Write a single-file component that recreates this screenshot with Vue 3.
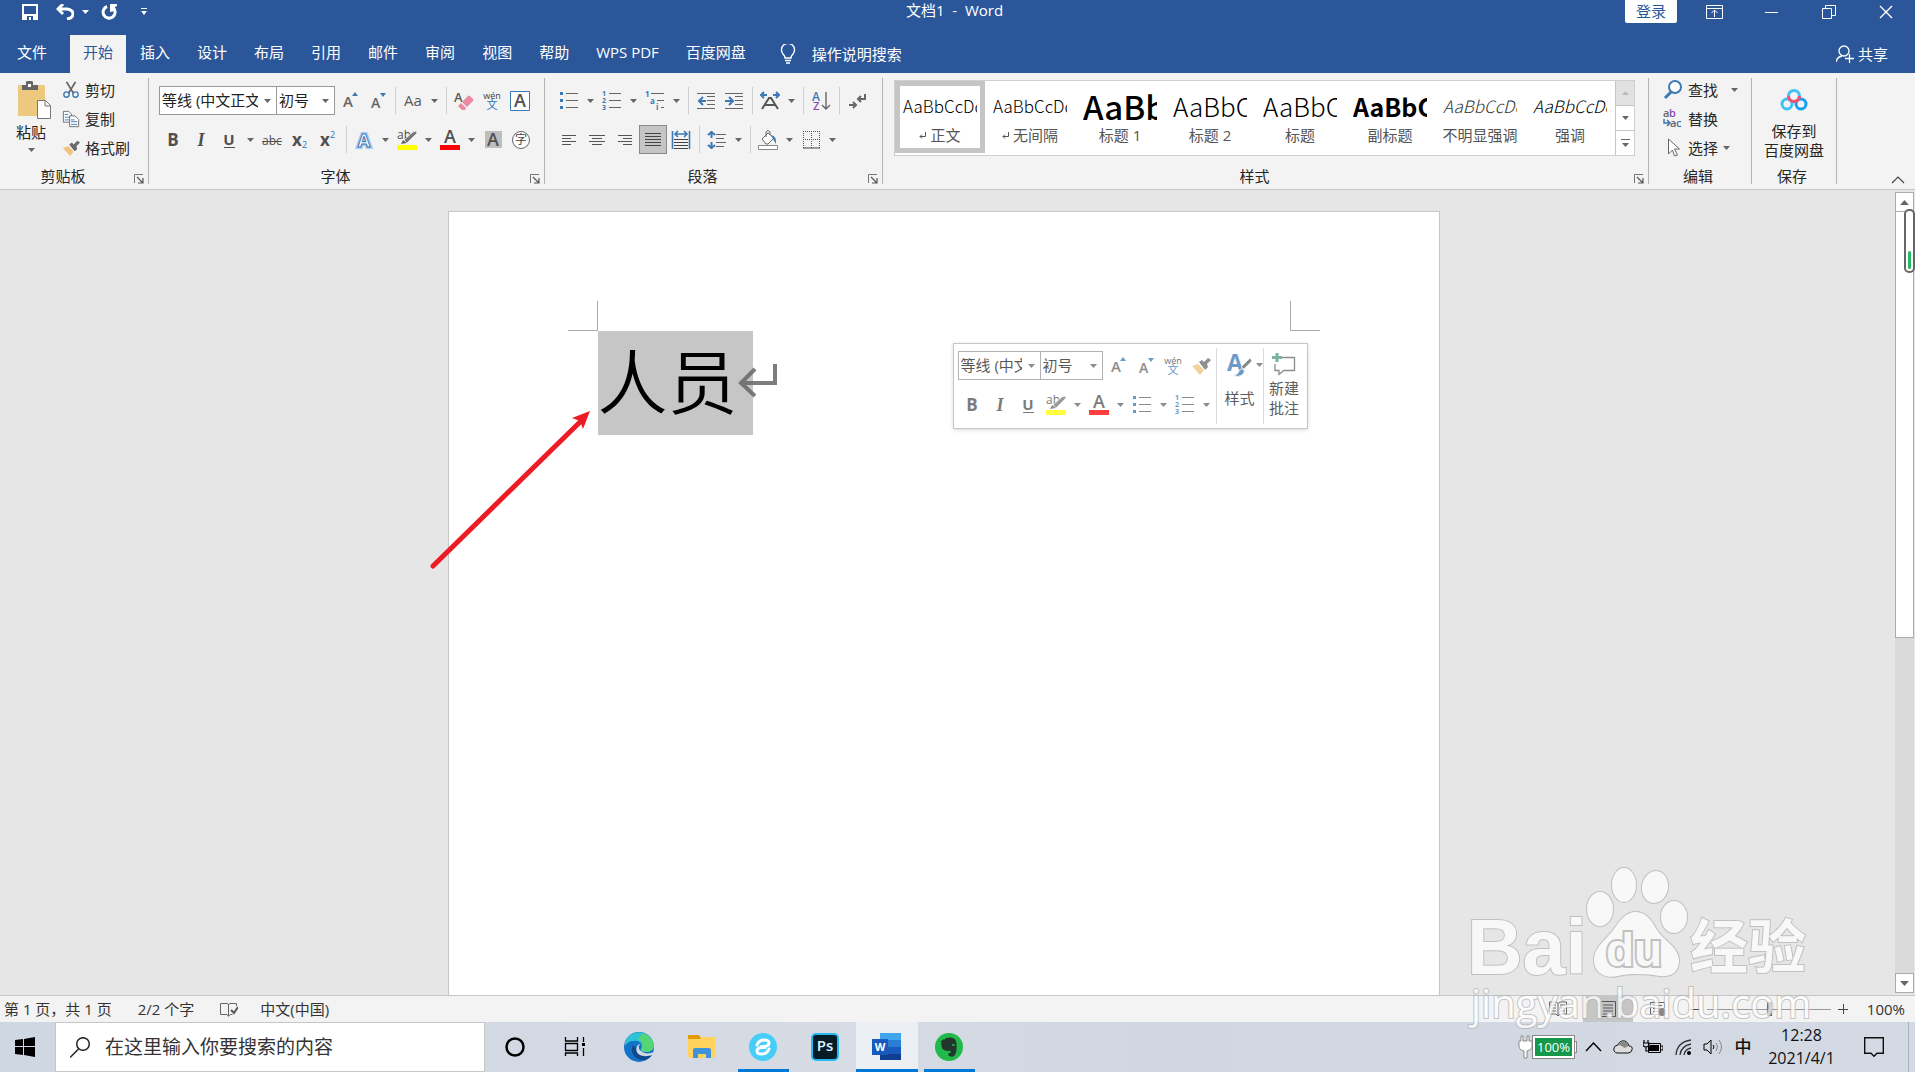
<template>
  <div class="desktop">
    <!-- 图标定义 -->
    <svg class="sprite" aria-hidden="true">
      <symbol id="i-caret" viewBox="0 0 7 4"><path d="M0 0h7L3.5 4z" fill="currentColor" /></symbol>
      <symbol id="i-bold" viewBox="0 0 20 20"><text x="10" y="16" text-anchor="middle" font-size="17" font-weight="700" fill="#505050">B</text></symbol>
      <symbol id="i-italic" viewBox="0 0 20 20"><text x="10" y="16" text-anchor="middle" font-size="18" font-weight="700" font-style="italic" font-family="Liberation Serif, serif" fill="#505050">I</text></symbol>
      <symbol id="i-underline" viewBox="0 0 20 20"><text x="10" y="15" text-anchor="middle" font-size="15" font-weight="700" fill="#505050">U</text><path d="M5 17h11v1H5z" fill="#505050" /></symbol>
      <symbol id="i-strike" viewBox="0 0 20 20"><text x="10" y="15" text-anchor="middle" font-size="12" fill="#505050">abc</text><path d="M0 11h20v1H0z" fill="#505050" /></symbol>
      <symbol id="i-sub" viewBox="0 0 20 20"><text x="2" y="16" font-size="17" font-weight="700" fill="#505050">x</text><text x="12" y="18" font-size="9" fill="#2e75b6">2</text></symbol>
      <symbol id="i-sup" viewBox="0 0 20 20"><text x="2" y="16" font-size="17" font-weight="700" fill="#505050">x</text><text x="12" y="8" font-size="9" fill="#2e75b6">2</text></symbol>
      <symbol id="i-grow" viewBox="0 0 20 20"><text x="4" y="16" font-size="15" font-weight="600" fill="#666">A</text><path d="M13 5h6l-3-4z" fill="#3c79b4" /></symbol>
      <symbol id="i-shrink" viewBox="0 0 20 20"><text x="4" y="17" font-size="14" font-weight="600" fill="#666">A</text><path d="M13 2h6l-3 4z" fill="#3c79b4" /></symbol>
      <symbol id="i-case" viewBox="0 0 20 20"><text x="10" y="15" text-anchor="middle" font-size="15" fill="#595959">Aa</text></symbol>
      <symbol id="i-clear" viewBox="0 0 20 20"><text x="0" y="11" font-size="13" font-weight="600" fill="#595959">A</text><path d="M8 11l6-6q1-1 2 0l3 3q1 1 0 2l-6 6z" fill="#ea8aa0" /><path d="M7 12l5 5-1 2H8l-4-4z" fill="#ea8aa0" /></symbol>
      <symbol id="i-pinyin" viewBox="0 0 20 20"><text x="10" y="8" text-anchor="middle" font-size="9" fill="#404040">wén</text><text x="10" y="18" text-anchor="middle" font-size="11" fill="#2e75b6">文</text></symbol>
      <symbol id="i-border-a" viewBox="0 0 20 20"><path d="M.5.5h19v19H.5z" fill="#fff" stroke="#3c79b4" /><text x="10" y="16" text-anchor="middle" font-size="18" font-weight="600" fill="#505050">A</text></symbol>
      <symbol id="i-effect" viewBox="0 0 20 20"><text x="10" y="17" text-anchor="middle" font-size="18" font-weight="700" fill="none" stroke="#a9cbf0" stroke-width="4">A</text><text x="10" y="17" text-anchor="middle" font-size="18" font-weight="700" fill="#fff" stroke="#3c79b4">A</text></symbol>
      <symbol id="i-highlight" viewBox="0 0 20 20"><text x="0" y="9" font-size="12" fill="#505050">ab</text><path d="M19 1l1 2-10 10-3-3L16 2z" fill="#777" stroke="#f3f3f3" stroke-width=".7" /><path d="M6 10l4 3-6 1z" fill="#666" /><path d="M0 15h20v5H0z" fill="#ff0" /></symbol>
      <symbol id="i-color" viewBox="0 0 20 20"><text x="10" y="13" text-anchor="middle" font-size="18" font-weight="600" fill="#505050">A</text><path d="M0 15h20v5H0z" fill="#f00" /></symbol>
      <symbol id="i-shade-a" viewBox="0 0 20 20"><path d="M2 1h17v17H2z" fill="#bdbdbd" /><text x="10" y="16" text-anchor="middle" font-size="18" font-weight="600" fill="#505050">A</text></symbol>
      <symbol id="i-circle" viewBox="0 0 20 20"><circle cx="10" cy="10" r="8.5" fill="#fff" stroke="#666" /><text x="10" y="14" text-anchor="middle" font-size="12" fill="#444">字</text></symbol>
      <symbol id="i-bullets" viewBox="0 0 20 20"><path d="M7 2.500h12M7 9.500h12M7 16.500h12" stroke="#666" /><path d="M1 1h3v3H1zM1 8h3v3H1zM1 15h3v3H1z" fill="#3c79b4" /></symbol>
      <symbol id="i-numbers" viewBox="0 0 20 20"><path d="M7 2.500h12M7 9.500h12M7 16.500h12" stroke="#666" /><g font-size="7" font-weight="700" fill="#3c79b4"><text x="0" y="5">1</text><text x="0" y="12">2</text><text x="0" y="19">3</text></g></symbol>
      <symbol id="i-levels" viewBox="0 0 20 20"><path d="M6 2.500h13M12 9.500h7M16 16.500h3" stroke="#666" /><g font-size="8" font-weight="700" fill="#3c79b4"><text x="0" y="6">1</text><text x="5" y="13">a</text><text x="11" y="19">i</text></g></symbol>
      <symbol id="i-outdent" viewBox="0 0 20 20"><path d="M1 2.500h18M11 5.500h8M11 9.500h8M11 13.500h8M1 17.500h18" stroke="#666" /><path d="M10 10H3m4-4l-4 4 4 4" fill="none" stroke="#3c79b4" stroke-width="2" /></symbol>
      <symbol id="i-indent" viewBox="0 0 20 20"><path d="M1 2.500h18M11 5.500h8M11 9.500h8M11 13.500h8M1 17.500h18" stroke="#666" /><path d="M1 10h7M5 6l4 4-4 4" fill="none" stroke="#3c79b4" stroke-width="2" /></symbol>
      <symbol id="i-asian" viewBox="0 0 20 20"><path d="M7 4H1m3-3L1 4l3 3M13 4h6m-3-3l3 3-3 3" fill="none" stroke="#3c79b4" stroke-width="2" /><path d="M2 18l7-11h2l7 11M5 14h10" fill="none" stroke="#555" stroke-width="2" /></symbol>
      <symbol id="i-sort" viewBox="0 0 20 20"><text x="1" y="10" font-size="12" font-weight="600" fill="#3c79b4">A</text><text x="2" y="19" font-size="11" font-weight="600" fill="#8a4baf">Z</text><path d="M15 1v17m-4-4l4 4 4-4" fill="none" stroke="#666" stroke-width="1.4" /></symbol>
      <symbol id="i-marks" viewBox="0 0 20 20"><path d="M18 3v5h-7m3-3l-3 3 3 3M2 14h7m-3-3l3 3-3 3" fill="none" stroke="#666" stroke-width="2" /></symbol>
      <symbol id="i-left" viewBox="0 0 20 20"><path d="M3 5.500h14M3 8.500h9M3 11.500h14M3 14.500h9" stroke="#555" /></symbol>
      <symbol id="i-center" viewBox="0 0 20 20"><path d="M2 5.500h16M5 8.500h10M2 11.500h16M5 14.500h10" stroke="#555" /></symbol>
      <symbol id="i-right" viewBox="0 0 20 20"><path d="M3 5.500h14M8 8.500h9M3 11.500h14M8 14.500h9" stroke="#555" /></symbol>
      <symbol id="i-justify" viewBox="0 0 20 20"><path d="M2 3.500h16M2 6.500h16M2 9.500h16M2 12.500h16M2 15.500h16" stroke="#444" /></symbol>
      <symbol id="i-spread" viewBox="0 0 20 20"><path d="M1.500 1v18M18.500 1v18M4 4h12M7 1L4 4l3 3m6-6l3 3-3 3" fill="none" stroke="#3c79b4" stroke-width="1.600" /><path d="M3 9.500h14M3 12.500h14M3 15.500h14M3 18.500h14" stroke="#444" /></symbol>
      <symbol id="i-spacing" viewBox="0 0 20 20"><path d="M4.500 1v7M1 5l3.500-3L8 5M4.500 19v-7M1 15l3.500 3L8 15" fill="none" stroke="#3c79b4" stroke-width="2" /><path d="M9 4.500h10M9 8.500h8M9 12.500h10M9 16.500h8" stroke="#666" /></symbol>
      <symbol id="i-fill" viewBox="0 0 20 20"><path d="M4 9l6-6 6 5-6 6H8z" fill="#fff" stroke="#666" /><path d="M8 7V2q2-3 4 0v3" fill="none" stroke="#666" /><path d="M13 5q6 1 5 9l-3-5z" fill="#3c79b4" /><path d="M.5 15.500h19v4H.5z" fill="#fff" stroke="#888" /></symbol>
      <symbol id="i-borders" viewBox="0 0 20 20"><path d="M2 1.500h17M2 9.500h17M2.500 1v17M10.500 1v17M18.500 1v17" stroke="#555" stroke-dasharray="1 1" /><path d="M2 18h17" stroke="#444" /></symbol>
      <symbol id="i-brush" viewBox="0 0 20 20"><path d="M1 10l6-2 6 6-4 5z" fill="#f0c37d" /><path d="M8 6l3-2 2 2 4-4 3 2-4 4 1 3-3 3z" fill="#6b6b6b" /><path d="M7 7l8 8" stroke="#fff" /></symbol>
      <symbol id="i-cut" viewBox="0 0 20 20"><path d="M5 1l8 13M15 1L7 14" stroke="#666" stroke-width="2" /><circle cx="5" cy="15" r="3" fill="none" stroke="#3c79b4" stroke-width="1.500" /><circle cx="15" cy="15" r="3" fill="none" stroke="#3c79b4" stroke-width="1.500" /></symbol>
      <symbol id="i-copy" viewBox="0 0 20 20"><path d="M1.500 1.500h6l3 3v9h-9z" fill="#fff" stroke="#666" /><path d="M3 5h4M3 8h6M3 11h6" stroke="#3c79b4" /><path d="M8.500 6.500h6l4 4v8h-10z" fill="#fff" stroke="#666" /><path d="M10 11h4M10 13h7M10 16h7" stroke="#3c79b4" /></symbol>
      <symbol id="i-launch" viewBox="0 0 10 10"><path d="M.5 9V.5H9" fill="none" stroke="#777" /><path d="M3 3l6 6M9 4v5H4" fill="none" stroke="#555" stroke-width="1.200" /></symbol>
      <symbol id="i-find" viewBox="0 0 20 20"><circle cx="12" cy="7" r="6" fill="#fff" stroke="#3c79b4" stroke-width="2" /><path d="M8 12l-6 6" stroke="#3c79b4" stroke-width="3" /></symbol>
      <symbol id="i-replace" viewBox="0 0 20 20"><g font-size="11" font-weight="600"><text x="0" y="8" fill="#666">a</text><text x="6" y="8" fill="#8a4baf">b</text><text x="7" y="18" fill="#666">a</text><text x="13" y="18" fill="#3c79b4">c</text></g><path d="M1 10v4h5m-2-3l3 3-3 3" fill="none" stroke="#3c79b4" stroke-width="1.500" /></symbol>
      <symbol id="i-select" viewBox="0 0 20 20"><path d="M5.500 1v15l4-4 2 6 3-1-3-6h5z" fill="#fff" stroke="#666" /></symbol>
      <symbol id="i-edge" viewBox="0 0 30 30"><circle cx="15" cy="15" r="15" fill="#1273c8" /><path d="M1 10C5-1 20-3 27 6c5 7 2 14-5 14-4 0-6-1-5-3 3-6-3-9-8-8Q4 9 1 14z" fill="#2fc3d5" /><path d="M19 1c9 4 13 11 10 16-2 3-8 4-11 2-2-1 0-3 0-4 1-4-1-6-4-8z" fill="#55d576" /><path d="M9 13c-4 8 3 16 12 15 3-1 6-3 7-5-7 3-13 0-14-5z" fill="#114a8b" /><path d="M17 19c-3-2-3-6 0-7-5 0-7 8-1 11 4 2 9 1 12 0 2-2 1-3-1-2-4 1-8 0-10-2z" fill="#d3dae3" /></symbol>
      <symbol id="i-folder" viewBox="0 0 30 30"><path d="M2 3h11l2 3-2 3H2z" fill="#e29b00" /><path d="M2 7h12l2-2h13v19q0 2-2 2H4q-2 0-2-2z" fill="#ffd35e" /><path d="M7 26V18q0-2 2-2h14q2 0 2 2v8h-5v-4h-8v4z" fill="#3f93db" /></symbol>
      <symbol id="i-ie" viewBox="0 0 30 30"><circle cx="15" cy="15" r="14" fill="#47cef8" /><path d="M9 13q2-5 7-5 5 0 5 3 0 3-5 3.500h-3M21 17q-2 5-7 5-5 0-5-3 0-3 5-3.500h3" fill="none" stroke="#fff" stroke-width="3" stroke-linecap="round" /></symbol>
      <symbol id="i-ps" viewBox="0 0 30 30"><rect x="2" y="2" width="26" height="26" rx="4" fill="#071c26" stroke="#26b9f0" stroke-width="2" /><text x="15" y="19" text-anchor="middle" font-size="15" font-weight="600" fill="#d9f5ff">Ps</text></symbol>
      <symbol id="i-word" viewBox="0 0 30 30"><path d="M8 1h21v8H8z" fill="#41a5ee" /><path d="M8 8h21v7H8z" fill="#2b7cd3" /><path d="M8 15h21v7H8z" fill="#185abd" /><path d="M8 22h21v6H8z" fill="#103f91" /><path d="M0 7h16v16H0z" fill="#185abd" /><text x="8" y="19" text-anchor="middle" font-size="11" font-weight="700" fill="#fff">W</text></symbol>
      <symbol id="i-note" viewBox="0 0 30 30"><circle cx="15" cy="15" r="14" fill="#20b94a" /><path d="M7 11l5-5q8-2 10 3c1 4 1 10-1 14q-2 3-6 1c-2-2 1-4 2-3q0-3-3-2-4 0-6-3z" fill="#24352d" /><path d="M6 10h4V7z" fill="#24352d" /><path d="M18 13h3" stroke="#20b94a" stroke-width="1.500" /></symbol>
      <symbol id="i-cortana" viewBox="0 0 30 30"><circle cx="15" cy="15" r="8.500" fill="none" stroke="#000" stroke-width="2.500" /></symbol>
      <symbol id="i-taskview" viewBox="0 0 30 30"><path d="M3.500 5v4h12V5M3.500 24v-3h12v3M3.500 11.500h12v7h-12zM21.500 5v5M21.500 16v8" fill="none" stroke="#000" stroke-width="1.300" /><path d="M20 11h3v3h-3z" /></symbol>
    </svg>

    <!-- 标题栏 -->
    <header class="titlebar">
      <div class="quick">
        <button class="quick-btn" aria-label="保存">
          <svg width="16" height="16" viewBox="0 0 16 16"><path d="M1 1h14v14H1z" fill="none" stroke="#fff" stroke-width="2" /><path d="M1 10h14v6H1z" fill="#fff" /><path d="M5 12h6v4H9v-3H7v3H5z" fill="#2b579a" /></svg>
        </button>
        <button class="quick-btn undo" aria-label="撤消">
          <svg width="18" height="16" viewBox="0 0 18 16"><path d="M2 5h9q6 1 6 5t-6 5M7 0L2 5l5 5" fill="none" stroke="#fff" stroke-width="3" /></svg>
          <svg class="caret" width="7" height="4"><use href="#i-caret" /></svg>
        </button>
        <button class="quick-btn redo" aria-label="重复">
          <svg width="18" height="16" viewBox="0 0 18 16"><path d="M6 2.500a6 6 0 1 0 6.500 1.500" fill="none" stroke="#fff" stroke-width="3" /><path d="M9 0h7v2l-2 1v4l-5 1z" fill="#fff" /></svg>
        </button>
        <button class="quick-btn more" aria-label="自定义快速访问工具栏">
          <svg width="6" height="7" viewBox="0 0 6 7"><path d="M0 0h6v1H0zM0 3h6L3 7z" fill="#fff" /></svg>
        </button>
      </div>
      <h1 class="doc-title">文档1&nbsp; -&nbsp; Word</h1>
      <div class="window-btns">
        <button class="login">登录</button>
        <button class="win-btn" aria-label="功能区显示选项">
          <svg width="17" height="14" viewBox="0 0 17 14"><path d="M.5.5h16v13H.5zM0 3.500h17M8.500 12V5M5.500 8l3-3 3 3" fill="none" stroke="#fff" /></svg>
        </button>
        <button class="win-btn" aria-label="最小化">
          <svg width="14" height="14" viewBox="0 0 14 14"><path d="M0 7.500h13" stroke="#fff" /></svg>
        </button>
        <button class="win-btn" aria-label="还原">
          <svg width="14" height="14" viewBox="0 0 14 14"><path d="M.5 3.500h9v10h-9zM3.500 3V.5h10v10H10" fill="none" stroke="#fff" /></svg>
        </button>
        <button class="win-btn" aria-label="关闭">
          <svg width="14" height="14" viewBox="0 0 14 14"><path d="M1 1l12 12M13 1L1 13" stroke="#fff" stroke-width="1.400" /></svg>
        </button>
      </div>
    </header>

    <!-- 选项卡 -->
    <nav class="tabs">
      <button
        v-for="tab in tabs"
        :key="tab"
        class="tab"
        :class="{ file: tab === '文件', active: tab === activeTab }"
        @click="activeTab = tab"
      >{{ tab }}</button>
      <button class="tell-me">
        <svg width="16" height="20" viewBox="0 0 16 20"><path d="M5 14q0-2-2-4a6.500 6.500 0 1 1 10 0q-2 2-2 4zM5 16.500h6M6 19h4" fill="none" stroke="#fff" stroke-width="1.400" /></svg>
        操作说明搜索
      </button>
      <button class="share">
        <svg width="18" height="18" viewBox="0 0 18 18"><circle cx="8" cy="6" r="5" fill="none" stroke="#fff" stroke-width="1.300" /><path d="M0 17q1-5 6-6M13.500 9v9M9 13.500h9" fill="none" stroke="#fff" stroke-width="1.300" /></svg>
        共享
      </button>
    </nav>

    <!-- 功能区 -->
    <section class="ribbon">
      <div class="group clipboard">
        <div class="group-body">
          <button class="paste">
            <svg class="board" width="36" height="39" viewBox="0 0 36 39"><path d="M2 4h25q2 0 2 2v27q0 2-2 2H2z" fill="#edc87f" /><path d="M6 9V4h4V1q0-1 2-1h3q2 0 2 1v3h5v5z" fill="#666" /><path d="M12 3h3v3h-3z" fill="#fff" /><path d="M21.500 19.500h8l5 5v13h-13zM29 20v5h5" fill="#fff" stroke="#777" /></svg>
            <span>粘贴</span>
            <svg class="caret" width="7" height="4"><use href="#i-caret" /></svg>
          </button>
          <div class="stack">
            <button v-for="item in clipItems" :key="item.label" class="stack-btn">
              <svg width="18" height="18"><use :href="'#i-' + item.icon" /></svg>{{ item.label }}
            </button>
          </div>
        </div>
        <div class="group-foot">
          <span>剪贴板</span>
          <button class="launch" aria-label="剪贴板选项"><svg width="10" height="10"><use href="#i-launch" /></svg></button>
        </div>
      </div>

      <div v-for="group in toolGroups" :key="group.name" class="group" :class="group.cls">
        <div class="rows">
          <div v-for="(row, r) in group.rows" :key="r" class="tool-row">
            <template v-for="(t, i) in row" :key="i">
              <label v-if="t.options" class="combo" :class="t.cls">
                <select :aria-label="t.label"><option v-for="o in t.options" :key="o">{{ o }}</option></select>
                <svg class="caret" width="7" height="4"><use href="#i-caret" /></svg>
              </label>
              <span v-else-if="t.sep" class="sep"></span>
              <template v-else>
                <button class="tool" :class="{ pressed: t.pressed }" :aria-label="t.label">
                  <svg width="20" height="20"><use :href="'#i-' + t.icon" /></svg>
                </button>
                <button v-if="t.menu" class="drop" :aria-label="t.label + '选项'">
                  <svg class="caret" width="7" height="4"><use href="#i-caret" /></svg>
                </button>
              </template>
            </template>
          </div>
        </div>
        <div class="group-foot">
          <span>{{ group.name }}</span>
          <button class="launch" :aria-label="group.name + '选项'"><svg width="10" height="10"><use href="#i-launch" /></svg></button>
        </div>
      </div>

      <div class="group styles">
        <div class="gallery">
          <div class="gallery-list">
            <button
              v-for="s in styleItems"
              :key="s.name"
              class="style-item"
              :class="{ selected: s.name === activeStyle }"
              @click="activeStyle = s.name"
            >
              <span class="preview" :class="s.cls">{{ s.sample }}</span>
              <span class="style-name">
                <svg v-if="s.mark" width="7" height="7" viewBox="0 0 7 7"><path d="M6.500 0v4.500H1M3 2.500l-2 2 2 2" fill="none" stroke="#555" /></svg>
                {{ s.name }}
              </span>
            </button>
          </div>
          <div class="gallery-scroll">
            <button class="off" aria-label="上一行"><svg class="flip" width="7" height="4"><use href="#i-caret" /></svg></button>
            <button aria-label="下一行"><svg width="7" height="4"><use href="#i-caret" /></svg></button>
            <button aria-label="其他样式"><svg width="9" height="9" viewBox="0 0 9 9"><path d="M0 0h9v1H0zM1 4h7L4.500 8z" fill="#666" /></svg></button>
          </div>
        </div>
        <div class="group-foot">
          <span>样式</span>
          <button class="launch" aria-label="样式选项"><svg width="10" height="10"><use href="#i-launch" /></svg></button>
        </div>
      </div>

      <div class="group editing">
        <div class="stack">
          <button v-for="item in editItems" :key="item.label" class="stack-btn">
            <svg width="20" height="20"><use :href="'#i-' + item.icon" /></svg>{{ item.label }}
            <svg v-if="item.menu" class="caret" :class="item.menu" width="7" height="4"><use href="#i-caret" /></svg>
          </button>
        </div>
        <div class="group-foot"><span>编辑</span></div>
      </div>

      <div class="group save">
        <button class="netdisk">
          <svg width="28" height="22" viewBox="0 0 28 22"><circle cx="14" cy="7" r="5.500" fill="none" stroke="#3ec2f5" stroke-width="3" /><circle cx="7" cy="15" r="5" fill="none" stroke="#3ec2f5" stroke-width="3" /><circle cx="21" cy="15" r="5" fill="none" stroke="#139ff5" stroke-width="3" /><path d="M8.500 7a5.500 5.500 0 0 0 11 0" fill="none" stroke="#f6506e" stroke-width="3" /></svg>
          <span>保存到<br />百度网盘</span>
        </button>
        <div class="group-foot"><span>保存</span></div>
      </div>
      <button class="collapse" aria-label="折叠功能区">
        <svg width="14" height="8" viewBox="0 0 14 8"><path d="M1 7l6-6 6 6" fill="none" stroke="#444" stroke-width="1.200" /></svg>
      </button>
    </section>

    <!-- 文档区 -->
    <main class="workspace">
      <div class="canvas">
        <article class="page">
          <div class="corners"><i class="corner left"></i><i class="corner right"></i></div>
          <p class="line">
            <mark>人员</mark>
            <svg class="return" width="40" height="36" viewBox="0 0 40 36"><path d="M37 1v19H3M17 6L3 20l14 13" fill="none" stroke="#666" stroke-opacity=".85" stroke-width="4" /></svg>
          </p>
          <svg class="arrow" width="162" height="160" viewBox="0 0 162 160"><path d="M3 156L150 12" stroke="#ed1c24" stroke-width="5" stroke-linecap="round" /><path d="M160 1l-18 7 8 3 3 8z" fill="#ed1c24" /></svg>

          <!-- 浮动工具栏 -->
          <div class="mini">
            <div class="rows mini-rows">
              <div v-for="(row, r) in miniRows" :key="r" class="tool-row">
                <template v-for="(t, i) in row" :key="i">
                  <label v-if="t.options" class="combo" :class="t.cls">
                    <select :aria-label="t.label"><option v-for="o in t.options" :key="o">{{ o }}</option></select>
                    <svg class="caret" width="7" height="4"><use href="#i-caret" /></svg>
                  </label>
                  <template v-else>
                    <button class="tool" :aria-label="t.label">
                      <svg width="20" height="20"><use :href="'#i-' + t.icon" /></svg>
                    </button>
                    <button v-if="t.menu" class="drop" :aria-label="t.label + '选项'">
                      <svg class="caret" width="7" height="4"><use href="#i-caret" /></svg>
                    </button>
                  </template>
                </template>
              </div>
            </div>
            <button class="mini-big look">
              <span class="mini-icon">
                <svg width="26" height="24" viewBox="0 0 26 24"><text x="0" y="18" font-size="23" font-weight="700" fill="#3c79b4">A</text><path d="M23 5l2 3-8 8-3-2z" fill="#666" stroke="#fff" stroke-width=".6" /><path d="M6 22q5 0 6-4 1-3 4-2 3 3-1 6-4 3-9 0z" fill="#3c79b4" stroke="#fff" stroke-width=".8" /></svg>
                <svg class="caret" width="7" height="4"><use href="#i-caret" /></svg>
              </span>
              <span class="one-line">样式</span>
            </button>
            <button class="mini-big">
              <span class="mini-icon">
                <svg width="24" height="24" viewBox="0 0 24 24"><path d="M10 4.500h12.500v13H12l-5 4v-4H3V11" fill="none" stroke="#666" stroke-width="1.300" /><path d="M5 0v9M0 4.500h10" stroke="#4f9a80" stroke-width="3" /></svg>
              </span>
              <span>新建<br />批注</span>
            </button>
          </div>
        </article>
      </div>
      <div class="scrollbar">
        <button aria-label="向上滚动"><svg class="flip" width="9" height="5"><use href="#i-caret" /></svg></button>
        <div class="track"><div class="thumb"></div></div>
        <button aria-label="向下滚动"><svg width="9" height="5"><use href="#i-caret" /></svg></button>
        <div class="meter"><i></i></div>
      </div>
    </main>

    <!-- 状态栏 -->
    <footer class="status">
      <span class="pages">第 1 页，共 1 页</span>
      <span class="words">2/2 个字</span>
      <svg class="proof" width="18" height="15" viewBox="0 0 18 15"><path d="M8.500 14.500L7 12.500H.5V1.500H7l1.500 1 1.500-1h6.500V4M8.500 2v12l2-1.500h2" fill="none" stroke="#666" /><path d="M11 8l3 3 4-6" fill="none" stroke="#555" stroke-width="2" /></svg>
      <span>中文(中国)</span>
      <div class="views">
        <button aria-label="阅读视图"><svg width="18" height="16" viewBox="0 0 18 16"><path d="M9 2.500L7 1H.5v12H7l2 2 2-2h6.500V1H11zM9 3v11M2 4h5M2 7h5M2 10h5M11 4h5M11 7h5M11 10h5" fill="none" stroke="#666" /></svg></button>
        <button class="on" aria-label="页面视图"><svg width="18" height="16" viewBox="0 0 18 16"><path d="M1.500.5h15v15h-15zM4 4h10M4 7h10M4 10h10M4 13h10" fill="none" stroke="#555" /></svg></button>
        <button aria-label="Web 版式视图"><svg width="18" height="16" viewBox="0 0 18 16"><path d="M9 13.500H1.500v-12h14V7M4 4.500h9M4 7.500h6M4 10.500h5" fill="none" stroke="#666" /><circle cx="13" cy="11" r="4" fill="#888" /></svg></button>
      </div>
      <button class="zoom-btn" aria-label="缩小"><svg width="10" height="10" viewBox="0 0 10 10"><path d="M0 5.500h10" stroke="#444" /></svg></button>
      <input v-model="zoom" class="zoom" type="range" min="0" max="200" aria-label="显示比例" />
      <button class="zoom-btn" aria-label="放大"><svg width="10" height="10" viewBox="0 0 10 10"><path d="M0 5.500h10M5.500 0v10" stroke="#444" /></svg></button>
      <span class="zoom-text">{{ zoom }}%</span>
    </footer>

    <!-- 任务栏 -->
    <footer class="taskbar">
      <button class="start" aria-label="开始">
        <svg width="20" height="20" viewBox="0 0 20 20"><path d="M0 3l8-1v7H0zM9 2l11-2v9H9zM0 10h8v8l-8-1zM9 10h11v10L9 18z" /></svg>
      </button>
      <label class="search">
        <svg width="21" height="21" viewBox="0 0 21 21"><circle cx="13" cy="7" r="6.300" fill="none" stroke="#222" stroke-width="1.500" /><path d="M8.500 12L0 20.500" stroke="#222" stroke-width="1.500" /></svg>
        <input type="text" placeholder="在这里输入你要搜索的内容" aria-label="搜索" />
      </label>
      <button v-for="app in apps" :key="app.icon" class="app" :class="app.state" :aria-label="app.label">
        <svg width="30" height="30"><use :href="'#i-' + app.icon" /></svg>
      </button>
      <div class="tray">
        <div class="battery">
          <svg width="15" height="24" viewBox="0 0 15 24"><path d="M3 1h2v5h4V1h2v5h3v6q0 3-5 4v7H6v-7q-5-1-5-4V6h2z" fill="#fff" stroke="#777" stroke-width=".8" /></svg>
          <span class="charge">100%</span>
          <i class="nub"></i>
        </div>
        <button aria-label="显示隐藏的图标"><svg width="17" height="10" viewBox="0 0 17 10"><path d="M1 9l7.500-8L16 9" fill="none" stroke="#000" stroke-width="1.400" /></svg></button>
        <button aria-label="OneDrive"><svg width="20" height="14" viewBox="0 0 20 14"><path d="M4 13q-4-1-3-5 1-3 4-3 2-5 7-4 3 1 4 5 4 0 3 4-1 3-4 3z" fill="#ddd" stroke="#111" /><path d="M5 5q2-4 7-3.500 3 1 3.500 4.500l-4 2q-3-3-6.500-3z" fill="#888" /></svg></button>
        <button aria-label="电源"><svg width="20" height="14" viewBox="0 0 20 14"><path d="M5.500 3.500h12v9h-12zM18 6h2v4h-2" fill="none" stroke="#000" /><path d="M7 5h9v6H5V8z" /><path d="M1 0v3M5 0v3M0 3h6v2q-1 2-3 2t-3-2zM3 7v4h2" fill="none" stroke="#000" stroke-width="1.200" /></svg></button>
        <button aria-label="网络"><svg width="17" height="17" viewBox="0 0 17 17"><path d="M1 16Q2 3 16 1M5 16Q6 7 16 5M9 16q1-6 7-7" fill="none" stroke="#333" stroke-width="1.300" /><circle cx="14" cy="14" r="2" /></svg></button>
        <button aria-label="音量"><svg width="20" height="16" viewBox="0 0 20 16"><path d="M1 5h3l4-4v14l-4-4H1z" fill="none" stroke="#000" /><path d="M10 6q2 2 0 4" fill="none" stroke="#000" /><path d="M13 4q3 4 0 8M16 1q5 7 0 14" fill="none" stroke="#888" /></svg></button>
        <button class="ime">中</button>
        <div class="clock"><span>12:28</span><span>2021/4/1</span></div>
        <button class="notice" aria-label="通知"><svg width="20" height="20" viewBox="0 0 20 20"><path d="M.7.7h18.600v15.600H13l-3 3-3-3H.7z" fill="none" stroke="#111" stroke-width="1.400" /></svg></button>
      </div>
    </footer>

    <!-- 水印 -->
    <svg class="watermark" width="350" height="176" viewBox="0 0 350 176">
      <g fill="#fff" stroke="#b4b4b4" stroke-width="2" paint-order="stroke">
        <text x="2" y="114" font-size="77" font-weight="700" font-family="Liberation Sans, sans-serif">Bai</text>
        <ellipse cx="135" cy="49" rx="13" ry="17" />
        <ellipse cx="159" cy="25" rx="12" ry="17" />
        <ellipse cx="190" cy="27" rx="13" ry="16" transform="rotate(10 190 27)" />
        <ellipse cx="209" cy="57" rx="13" ry="16" />
        <path d="M171 52c10 0 16 9 21 18 8 12 22 17 22 31 0 12-9 16-19 15-12-2-30-3-42 0-13 3-24-3-24-16 0-13 12-20 20-31 6-9 12-17 22-17z" />
        <text x="141" y="106" font-size="46" font-weight="700" font-family="Liberation Sans, sans-serif" stroke-width="4">du</text>
        <text x="225" y="108" font-size="58" font-weight="700">经验</text>
        <text x="6" y="158" font-size="40">jingyan.baidu.com</text>
      </g>
    </svg>
  </div>
</template>

<script setup>
import { ref } from 'vue'

const activeTab = ref('开始')
const activeStyle = ref('正文')
const zoom = ref(100)

const tabs = ['文件', '开始', '插入', '设计', '布局', '引用', '邮件', '审阅', '视图', '帮助', 'WPS PDF', '百度网盘']

const clipItems = [
  { icon: 'cut', label: '剪切' },
  { icon: 'copy', label: '复制' },
  { icon: 'brush', label: '格式刷' }
]

const editItems = [
  { icon: 'find', label: '查找', menu: 'far' },
  { icon: 'replace', label: '替换' },
  { icon: 'select', label: '选择', menu: 'near' }
]

// 字体和段落两组按钮
const sep = { sep: true }
const fonts = ['等线 (中文正文)', '宋体', '黑体']
const sizes = ['初号', '小初', '一号']

const toolGroups = [
  {
    name: '字体',
    cls: 'font',
    rows: [
      [
        { options: fonts, label: '字体', cls: 'family' },
        { options: sizes, label: '字号', cls: 'size' },
        { icon: 'grow', label: '增大字号' },
        { icon: 'shrink', label: '减小字号' },
        sep,
        { icon: 'case', label: '更改大小写', menu: true },
        sep,
        { icon: 'clear', label: '清除格式' },
        { icon: 'pinyin', label: '拼音指南' },
        { icon: 'border-a', label: '字符边框' }
      ],
      [
        { icon: 'bold', label: '加粗' },
        { icon: 'italic', label: '倾斜' },
        { icon: 'underline', label: '下划线', menu: true },
        { icon: 'strike', label: '删除线' },
        { icon: 'sub', label: '下标' },
        { icon: 'sup', label: '上标' },
        sep,
        { icon: 'effect', label: '文本效果', menu: true },
        { icon: 'highlight', label: '突出显示', menu: true },
        { icon: 'color', label: '字体颜色', menu: true },
        { icon: 'shade-a', label: '字符底纹' },
        { icon: 'circle', label: '带圈字符' }
      ]
    ]
  },
  {
    name: '段落',
    cls: 'paragraph',
    rows: [
      [
        { icon: 'bullets', label: '项目符号', menu: true },
        { icon: 'numbers', label: '编号', menu: true },
        { icon: 'levels', label: '多级列表', menu: true },
        sep,
        { icon: 'outdent', label: '减少缩进' },
        { icon: 'indent', label: '增加缩进' },
        sep,
        { icon: 'asian', label: '中文版式', menu: true },
        sep,
        { icon: 'sort', label: '排序' },
        sep,
        { icon: 'marks', label: '显示编辑标记' }
      ],
      [
        { icon: 'left', label: '左对齐' },
        { icon: 'center', label: '居中' },
        { icon: 'right', label: '右对齐' },
        { icon: 'justify', label: '两端对齐', pressed: true },
        { icon: 'spread', label: '分散对齐' },
        sep,
        { icon: 'spacing', label: '行距', menu: true },
        sep,
        { icon: 'fill', label: '底纹', menu: true },
        { icon: 'borders', label: '边框', menu: true }
      ]
    ]
  }
]

const miniRows = [
  [
    { options: fonts, label: '字体', cls: 'family' },
    { options: sizes, label: '字号', cls: 'size' },
    { icon: 'grow', label: '增大字号' },
    { icon: 'shrink', label: '减小字号' },
    { icon: 'pinyin', label: '拼音指南' },
    { icon: 'brush', label: '格式刷' }
  ],
  [
    { icon: 'bold', label: '加粗' },
    { icon: 'italic', label: '倾斜' },
    { icon: 'underline', label: '下划线' },
    { icon: 'highlight', label: '突出显示', menu: true },
    { icon: 'color', label: '字体颜色', menu: true },
    { icon: 'bullets', label: '项目符号', menu: true },
    { icon: 'numbers', label: '编号', menu: true }
  ]
]

const styleItems = [
  { name: '正文', sample: 'AaBbCcDd', mark: true },
  { name: '无间隔', sample: 'AaBbCcDd', mark: true },
  { name: '标题 1', sample: 'AaBb', cls: 'h1' },
  { name: '标题 2', sample: 'AaBbC', cls: 'h2' },
  { name: '标题', sample: 'AaBbC', cls: 'h2' },
  { name: '副标题', sample: 'AaBbC', cls: 'sub' },
  { name: '不明显强调', sample: 'AaBbCcDd', cls: 'soft' },
  { name: '强调', sample: 'AaBbCcDd', cls: 'em' }
]

const apps = [
  { icon: 'cortana', label: 'Cortana' },
  { icon: 'taskview', label: '任务视图' },
  { icon: 'edge', label: 'Edge' },
  { icon: 'folder', label: '文件资源管理器' },
  { icon: 'ie', label: '浏览器', state: 'running' },
  { icon: 'ps', label: 'Photoshop' },
  { icon: 'word', label: 'Word', state: 'current' },
  { icon: 'note', label: '印象笔记', state: 'running' }
]
</script>

<style>
body {
  margin: 0;
}
</style>

<style scoped>
.desktop {
  position: relative;
  display: flex;
  flex-direction: column;
  height: 100vh;
  overflow: hidden;
  font-family: "Open Sans", "Noto Sans CJK SC", sans-serif;
  font-size: 15px;
  line-height: 20px;
  color: #262626;
  background: #e6e6e6;
}

.desktop * {
  box-sizing: border-box;
}

svg {
  display: block;
  flex: none;
}

.sprite {
  display: none;
}

button {
  display: flex;
  align-items: center;
  justify-content: center;
  flex: none;
  padding: 0;
  border: 0;
  background: none;
  color: inherit;
  font: inherit;
  white-space: nowrap;
}

.caret {
  color: #666;
}

.flip {
  transform: rotate(180deg);
}

/* 标题栏 */
.titlebar {
  display: grid;
  grid-template-columns: 1fr auto 1fr;
  align-items: start;
  flex: none;
  height: 35px;
  background: #2b579a;
  color: #fff;
}

.quick {
  display: flex;
  align-items: center;
  height: 23px;
  padding-left: 22px;
}

.quick .caret {
  color: #fff;
}

.undo {
  gap: 8px;
  margin-left: 18px;
}

.redo {
  margin-left: 12px;
}

.more {
  margin-left: 22px;
}

.doc-title {
  margin: 0;
  padding-right: 6px;
  font-size: 15px;
  font-weight: 400;
  line-height: 20px;
}

.window-btns {
  display: flex;
  justify-content: flex-end;
  padding-right: 1px;
}

.login {
  width: 52px;
  height: 23px;
  margin-right: 9px;
  padding-bottom: 2px;
  border-radius: 0 0 2px 2px;
  background: #fff;
  color: #2b579a;
}

.win-btn {
  width: 57px;
  height: 23px;
}

/* 选项卡 */
.tabs {
  display: flex;
  flex: none;
  gap: 1px;
  height: 38px;
  padding: 0 27px 0 4px;
  background: #2b579a;
  color: #fff;
}

.tab {
  padding: 0 13px 4px;
}

.tab.file {
  margin-right: 9px;
}

.tab.active {
  background: #f3f3f3;
  color: #2b579a;
}

.tell-me {
  gap: 16px;
  margin-left: 20px;
}

.share {
  gap: 4px;
  margin-left: auto;
}

/* 功能区 */
.ribbon {
  display: flex;
  flex: none;
  height: 117px;
  padding: 5px 0;
  border-bottom: 1px solid #c6c6c6;
  background: #f3f3f3;
}

.group {
  display: flex;
  flex-direction: column;
  justify-content: space-between;
  flex: none;
  border-right: 1px solid #b5b5b5;
}

.clipboard {
  width: 149px;
}

.font {
  width: 396px;
}

.paragraph {
  width: 338px;
}

.styles {
  flex: 1;
  min-width: 0;
}

.editing {
  width: 103px;
}

.save {
  width: 85px;
}

.group-body {
  display: flex;
}

.rows {
  display: flex;
  flex-direction: column;
  gap: 10px;
  padding: 8px 0 0 10px;
}

.group-foot {
  display: flex;
  align-items: flex-end;
  height: 18px;
}

.group-foot span {
  flex: 1;
  padding-right: 4px;
  line-height: 16px;
  text-align: center;
}

.launch {
  width: 18px;
  height: 10px;
}

.paste {
  flex-direction: column;
  justify-content: flex-start;
  width: 62px;
  padding-top: 3px;
}

.paste .board {
  margin-left: 6px;
}

.paste span {
  line-height: 24px;
}

.paste .caret {
  margin-top: 4px;
}

.stack {
  display: flex;
  flex-direction: column;
  gap: 1px;
  margin-top: -2px;
}

.stack-btn {
  justify-content: flex-start;
  gap: 5px;
  height: 28px;
}

.editing .stack {
  padding-left: 14px;
}

.stack-btn .far {
  margin-left: 8px;
}

.tool-row {
  display: flex;
  align-items: center;
  height: 29px;
}

.tool {
  width: 28px;
  height: 29px;
}

.tool.pressed {
  border: 1px solid #8a8a8a;
  background: #c5c5c5;
}

.drop {
  width: 15px;
  height: 29px;
}

.sep {
  width: 8px;
  height: 27px;
  background: linear-gradient(#cfcfcf, #cfcfcf) center / 1px 100% no-repeat;
}

.combo {
  position: relative;
  height: 29px;
  border: 1px solid #999;
  background: #fff;
}

.combo + .combo {
  border-left: 0;
}

.combo.family {
  width: 118px;
}

.combo.size {
  width: 58px;
}

.combo select {
  width: 100%;
  height: 100%;
  padding: 0 18px 2px 2px;
  border: 0;
  appearance: none;
  background: none;
  color: #222;
  font: inherit;
}

.combo .caret {
  position: absolute;
  top: 12px;
  right: 5px;
  pointer-events: none;
}

/* 样式库 */
.gallery {
  display: flex;
  height: 76px;
  margin: 2px 13px 0 11px;
  border: 1px solid #cfcfcf;
  background: #fff;
}

.gallery-list {
  display: flex;
  flex: 1;
  min-width: 0;
  overflow: hidden;
}

.style-item {
  flex-direction: column;
  justify-content: flex-end;
  width: 90px;
  height: 72px;
  padding: 0 3px 3px;
  border: 5px solid transparent;
}

.style-item.selected {
  border-color: #c5c5c5;
}

.preview {
  width: 74px;
  height: 34px;
  overflow: hidden;
  font-family: "Noto Sans CJK SC", sans-serif;
  font-size: 17px;
  font-weight: 300;
  line-height: 30px;
  text-align: left;
  color: #000;
}

.preview.h1 {
  font-size: 33px;
  font-weight: 500;
}

.preview.h2 {
  font-size: 26px;
}

.preview.sub {
  font-size: 25px;
  font-weight: 700;
}

.preview.soft {
  font-style: italic;
  color: #333;
}

.preview.em {
  font-style: italic;
}

.style-name {
  display: flex;
  align-items: center;
  gap: 4px;
  color: #555;
}

.gallery-scroll {
  display: flex;
  flex-direction: column;
  width: 19px;
  border-left: 1px solid #c6c6c6;
  color: #666;
}

.gallery-scroll button {
  flex: 1;
  border-bottom: 1px solid #c6c6c6;
}

.gallery-scroll button:last-child {
  border-bottom: 0;
}

.gallery-scroll .off {
  background: #e1e1e1;
  color: #bbb;
}

.netdisk {
  flex-direction: column;
  gap: 11px;
  padding-top: 11px;
}

.netdisk span {
  line-height: 19px;
}

.collapse {
  align-items: flex-end;
  width: 78px;
  padding: 0 0 0 44px;
}

/* 文档区 */
.workspace {
  display: flex;
  flex: 1;
  min-height: 0;
}

.canvas {
  display: flex;
  justify-content: center;
  flex: 1;
  padding: 21px 8px 0 0;
  overflow: hidden;
}

.page {
  position: relative;
  width: 992px;
  padding: 89px 119px 0;
  border: 1px solid #c6c6c6;
  border-bottom: 0;
  background: #fff;
}

.corners {
  display: flex;
  justify-content: space-between;
}

.corner {
  width: 30px;
  height: 30px;
  border-bottom: 1px solid #aaa;
}

.corner.left {
  border-right: 1px solid #aaa;
}

.corner.right {
  border-left: 1px solid #aaa;
}

.line {
  display: flex;
  margin: 0 30px;
  font-size: 70px;
  line-height: 96px;
}

.line mark {
  padding: 0 15px 8px 0;
  background: #c6c6c6;
  color: #000;
  font-family: "Noto Sans CJK SC", sans-serif;
  font-weight: 350;
}

.return {
  margin: 32px 0 0 -15px;
}

.arrow {
  position: absolute;
  top: 198px;
  left: -19px;
}

.mini {
  position: absolute;
  top: 131px;
  left: 504px;
  display: flex;
  width: 355px;
  height: 86px;
  border: 1px solid #c6c6c6;
  background: #fff;
  box-shadow: 0 1px 4px rgba(0, 0, 0, 0.15);
}

.mini > * {
  opacity: 0.75;
}

.mini-rows {
  width: 262px;
  padding: 7px 0 0 4px;
}

.mini .combo.family {
  width: 83px;
}

.mini .combo.size {
  width: 62px;
}

.mini-big {
  flex-direction: column;
  justify-content: flex-start;
  width: 42px;
  margin: 4px 0;
  padding-top: 4px;
  border-left: 1px solid #d0d0d0;
}

.mini-big.look {
  width: 47px;
}

.mini-icon {
  display: flex;
  align-items: center;
  gap: 3px;
  height: 26px;
}

.look .mini-icon {
  align-self: flex-end;
}

.one-line {
  line-height: 40px;
}

/* 滚动条 */
.scrollbar {
  position: relative;
  display: flex;
  flex-direction: column;
  width: 20px;
  padding: 2px 1px 2px 0;
}

.scrollbar button {
  height: 20px;
  border: 1px solid #ababab;
  background: #fff;
  color: #666;
}

.track {
  flex: 1;
  background: #dadada;
}

.thumb {
  height: 56%;
  border: 1px solid #ababab;
  border-top: 0;
  background: #fff;
}

.meter {
  position: absolute;
  top: 19px;
  right: 0;
  display: flex;
  align-items: flex-end;
  width: 11px;
  height: 64px;
  padding: 2px;
  border: 2px solid #666;
  border-radius: 5px;
  background: #fff;
}

.meter i {
  width: 100%;
  height: 18px;
  border-radius: 2px;
  background: #22bb66;
}

/* 状态栏 */
.status {
  display: flex;
  align-items: center;
  flex: none;
  height: 27px;
  padding: 0 10px 0 4px;
  border-top: 1px solid #c6c6c6;
  background: #f3f3f3;
  color: #333;
}

.words {
  margin-left: 26px;
}

.proof {
  margin: 0 22px 0 26px;
}

.views {
  display: flex;
  align-self: stretch;
  margin-left: auto;
}

.views button {
  width: 50px;
}

.views .on {
  background: #c6c6c6;
}

.zoom-btn {
  width: 24px;
  height: 20px;
}

.zoom {
  width: 124px;
  height: 16px;
  margin: 0;
  appearance: none;
  background: linear-gradient(#999, #999) center / 100% 1px no-repeat;
}

.zoom::-webkit-slider-thumb {
  width: 5px;
  height: 14px;
  appearance: none;
  background: #555;
}

.zoom-text {
  width: 50px;
  text-align: right;
}

/* 任务栏 */
.taskbar {
  display: flex;
  flex: none;
  height: 50px;
  background: linear-gradient(90deg, #cfd7e2, #d6dbe4 45%, #d0d7e1 60%, #d3dae4);
  color: #111;
}

.start {
  width: 55px;
  padding-right: 5px;
}

.search {
  display: flex;
  align-items: center;
  gap: 14px;
  width: 430px;
  margin-right: -1px;
  padding-left: 14px;
  border: 1px solid #c6c6c6;
  background: #fff;
}

.search input {
  flex: 1;
  min-width: 0;
  padding: 0;
  border: 0;
  outline: 0;
  font: inherit;
  font-size: 19px;
}

.search input::placeholder {
  color: #333;
}

.app {
  position: relative;
  width: 62px;
}

.app.current {
  border-bottom: 3px solid #0078d7;
  background: #eceff4;
  padding-top: 3px;
}

.app.running::after {
  content: "";
  position: absolute;
  right: 5px;
  bottom: 0;
  left: 6px;
  height: 3px;
  background: #0078d7;
}

.tray {
  display: flex;
  align-items: stretch;
  margin-left: auto;
  padding-right: 6px;
}

.tray button {
  width: 30px;
}

.battery {
  display: flex;
  align-items: center;
  width: 60px;
}

.charge {
  width: 41px;
  height: 22px;
  border: 2px solid #fff;
  outline: 1px solid #888;
  background: #16984a;
  color: #fff;
  font-size: 13px;
  line-height: 18px;
  text-align: center;
}

.nub {
  width: 3px;
  height: 12px;
  border: 1px solid #888;
  background: #fff;
}

.tray .ime {
  font-size: 17px;
  font-weight: 500;
}

.clock {
  display: flex;
  flex-direction: column;
  justify-content: center;
  width: 87px;
  font-size: 16px;
  line-height: 23px;
  text-align: center;
}

.tray .notice {
  width: 64px;
  padding-right: 6px;
  border-right: 1px solid #a9b3c0;
}

/* 水印 */
.watermark {
  position: absolute;
  right: 100px;
  bottom: 36px;
  opacity: 0.75;
  pointer-events: none;
}
</style>
